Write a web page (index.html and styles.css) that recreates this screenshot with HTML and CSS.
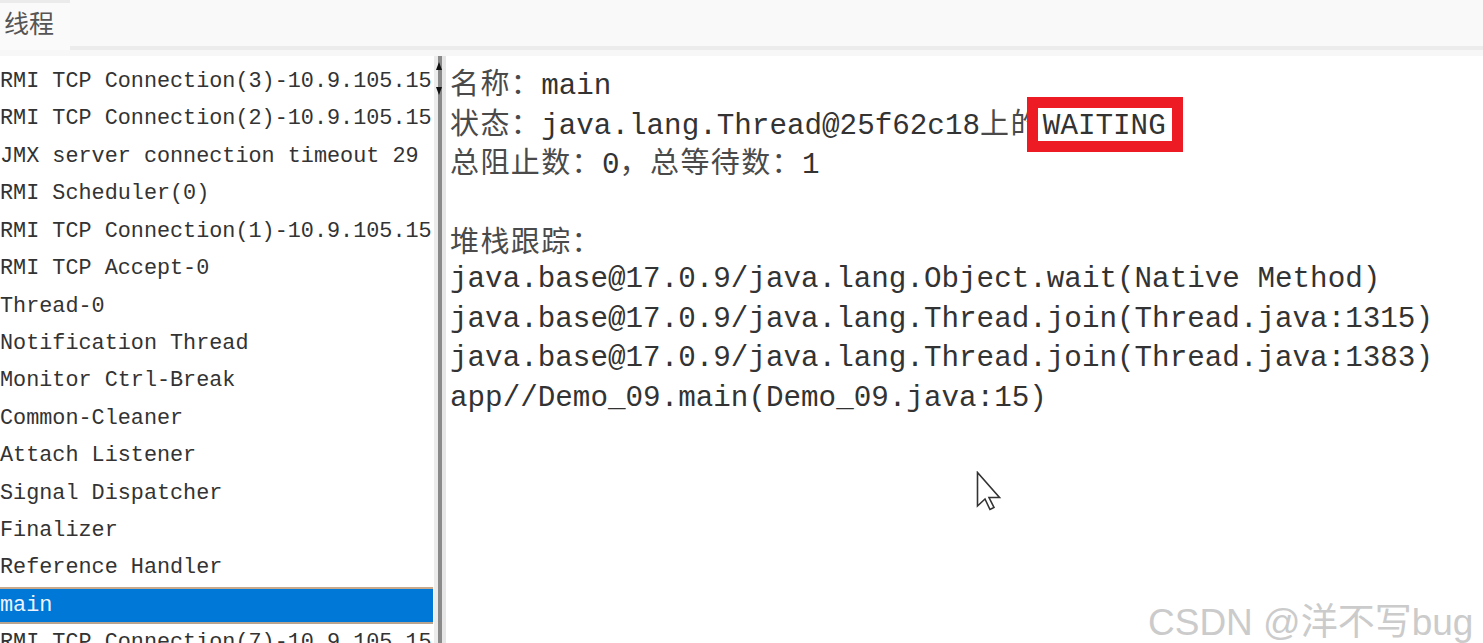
FILE: index.html
```html
<!DOCTYPE html>
<html lang="zh">
<head>
<meta charset="utf-8">
<title>线程</title>
<link rel="stylesheet" href="styles.css">
</head>
<body>
<div class="app">
  <div class="header">
    <div class="tab">线程</div>
    <div class="tabfill"></div>
  </div>
  <div class="strip"></div>
  <div class="main">
    <ul class="list">
      <li>RMI TCP Connection(3)-10.9.105.15</li>
      <li>RMI TCP Connection(2)-10.9.105.15</li>
      <li>JMX server connection timeout 29</li>
      <li>RMI Scheduler(0)</li>
      <li>RMI TCP Connection(1)-10.9.105.15</li>
      <li>RMI TCP Accept-0</li>
      <li>Thread-0</li>
      <li>Notification Thread</li>
      <li>Monitor Ctrl-Break</li>
      <li>Common-Cleaner</li>
      <li>Attach Listener</li>
      <li>Signal Dispatcher</li>
      <li>Finalizer</li>
      <li>Reference Handler</li>
      <li class="selected">main</li>
      <li>RMI TCP Connection(7)-10.9.105.15</li>
    </ul>
    <div class="divider">
      <span class="arrow up"></span>
      <span class="arrow down"></span>
    </div>
    <div class="detail">
      <div class="line"><span class="cjk">名称：</span>main</div>
      <div class="line"><span class="cjk">状态：</span>java.lang.Thread@25f62c18<span class="cjk">上的</span><span class="mark">WAITING</span></div>
      <div class="line"><span class="cjk">总阻止数：</span>0<span class="cjk">，总等待数：</span>1</div>
      <div class="line"></div>
      <div class="line"><span class="cjk">堆栈跟踪：</span></div>
      <div class="line">java.base@17.0.9/java.lang.Object.wait(Native Method)</div>
      <div class="line">java.base@17.0.9/java.lang.Thread.join(Thread.java:1315)</div>
      <div class="line">java.base@17.0.9/java.lang.Thread.join(Thread.java:1383)</div>
      <div class="line">app//Demo_09.main(Demo_09.java:15)</div>
    </div>
  </div>
  <svg class="cursor" width="26" height="40" viewBox="0 0 26 40">
    <path d="M1.5 1.5 L1.5 35 L9 28 L14 38.5 L18 36.5 L13 26.5 L23.5 26.5 Z" fill="#fff" stroke="#333" stroke-width="1.6" stroke-linejoin="miter"/>
  </svg>
  <div class="watermark">CSDN @洋不写bug</div>
</div>
</body>
</html>
```
FILE: styles.css
```css
html, body {
  margin: 0;
  padding: 0;
  background: #fff;
}
body {
  width: 1483px;
  height: 643px;
  overflow: hidden;
}
.app {
  position: relative;
  width: 1483px;
  height: 643px;
  overflow: hidden;
  display: flex;
  flex-direction: column;
}
.header {
  height: 50px;
  display: flex;
  background: #f9f9f9;
  flex: none;
}
.tab {
  width: 70px;
  box-sizing: border-box;
  border-top: 3px solid #ebebeb;
  padding-left: 4px;
  font-family: "Noto Sans CJK SC", sans-serif;
  font-size: 25px;
  line-height: 38px;
  color: #555;
  background: #fafafa;
}
.tabfill {
  flex: 1;
  border-bottom: 4px solid #ececec;
}
.strip {
  height: 6px;
  background: #f7f7f7;
  flex: none;
}
.main {
  flex: 1;
  display: flex;
  min-height: 0;
}
.list {
  list-style: none;
  margin: 0;
  padding: 7px 0 0 0;
  width: 434px;
  flex: none;
  font-family: "Liberation Mono", monospace;
  font-size: 21.8px;
  color: #333;
}
.list li {
  height: 37.43px;
  line-height: 37.43px;
  white-space: nowrap;
  box-sizing: border-box;
  width: 433px;
}
.list li.selected {
  background: #0078d7;
  color: #eef4ff;
  border-top: 2px solid #c9a98c;
  border-bottom: 2px solid #b9a48f;
  line-height: 33.43px;
}
.divider {
  position: relative;
  width: 4px;
  flex: none;
  background: #8a8a8a;
  border-left: 4px solid #ececec;
  border-right: 4px solid #e6e6e6;
}
.arrow {
  position: absolute;
  left: -2px;
  width: 0;
  height: 0;
  border-left: 3px solid transparent;
  border-right: 3px solid transparent;
}
.arrow.up {
  top: 6px;
  border-bottom: 8px solid #111;
}
.arrow.down {
  top: 31px;
  border-top: 8px solid #111;
}
.detail {
  flex: 1;
  padding: 6px 0 0 4px;
  font-family: "Liberation Mono", monospace;
  font-size: 29.25px;
  color: #333;
}
.line {
  height: 39.6px;
  line-height: 39.6px;
  white-space: nowrap;
}
.cjk {
  font-family: "Noto Sans CJK SC", sans-serif;
  letter-spacing: 1.4px;
  color: #4a4a4a;
  font-size: 29px;
}
.mark {
  position: relative;
  margin-left: 2px;
}
.mark::after {
  content: "";
  position: absolute;
  left: -16px;
  right: -17px;
  top: -13px;
  bottom: -9px;
  border: 11px solid #ed1c24;
}
.cursor {
  position: absolute;
  left: 976px;
  top: 471px;
}
.watermark {
  position: absolute;
  left: 1148px;
  top: 600px;
  font-family: "Liberation Sans", "Noto Sans CJK SC", sans-serif;
  font-size: 37px;
  line-height: 46px;
  color: #cbcbcb;
  white-space: nowrap;
}
```
